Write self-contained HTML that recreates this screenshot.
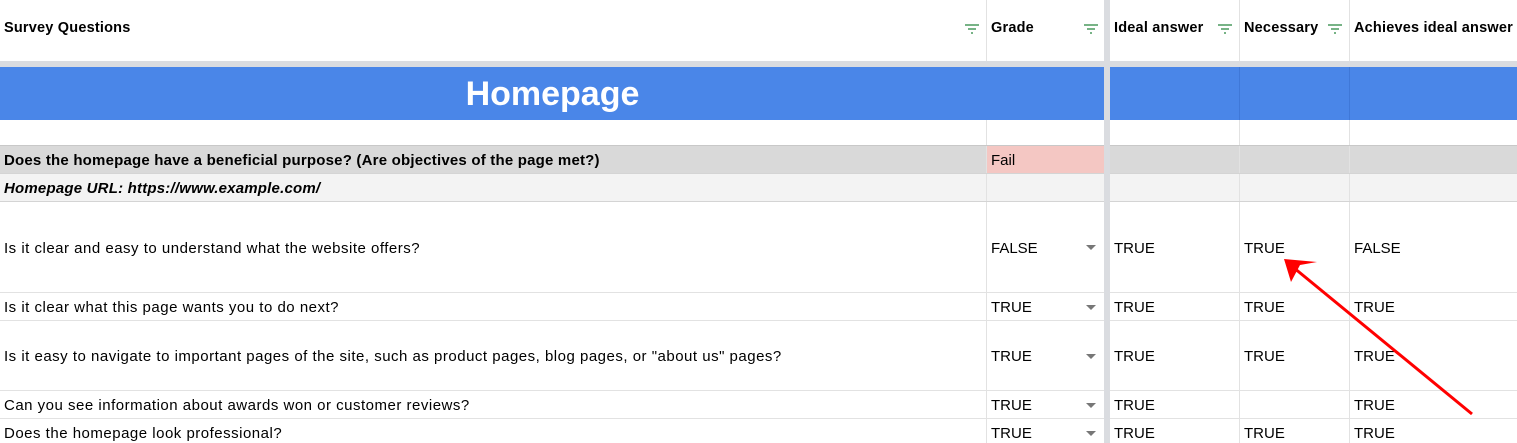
<!DOCTYPE html>
<html><head><meta charset="utf-8"><style>
body{margin:0;width:1517px;height:443px;overflow:hidden;background:#fff;font-family:"Liberation Sans",sans-serif;font-size:15px;letter-spacing:0.5px;color:#000;position:relative}
.a{position:absolute}
.t{position:absolute;white-space:nowrap}
.vl{position:absolute;width:1px;background:#e2e2e2}
.hl{position:absolute;height:1px;background:#e2e2e2;left:0;width:1517px}
.b{font-weight:bold;font-size:15px;letter-spacing:0.2px}
.h{font-weight:bold;font-size:14.5px;letter-spacing:0.2px}
.v{letter-spacing:0}
.dd{position:absolute;width:0;height:0;border-left:5px solid transparent;border-right:5px solid transparent;border-top:5px solid #777;left:1086px}
</style></head><body>
<div class="a" style="left:0;top:67px;width:1517px;height:53px;background:#4a86e8"></div>
<div class="a" style="left:0;top:145px;width:1517px;height:28px;background:#d9d9d9"></div>
<div class="a" style="left:987px;top:145px;width:118px;height:28px;background:#f4c7c3"></div>
<div class="a" style="left:0;top:173px;width:1517px;height:28px;background:#f3f3f3"></div>
<div class="vl" style="left:986px;top:0;height:67px"></div>
<div class="vl" style="left:986px;top:120px;height:323px"></div>
<div class="vl" style="left:1239px;top:0;height:443px"></div>
<div class="vl" style="left:1349px;top:0;height:443px"></div>
<div class="a" style="left:1239px;top:67px;width:1px;height:53px;background:#3f78d8"></div>
<div class="a" style="left:1349px;top:67px;width:1px;height:53px;background:#3f78d8"></div>
<div class="hl" style="top:145px;background:#c8c8c8"></div>
<div class="hl" style="top:173px;background:#d4d4d4"></div>
<div class="hl" style="top:201px;background:#d4d4d4"></div>
<div class="hl" style="top:292px"></div>
<div class="hl" style="top:320px"></div>
<div class="hl" style="top:390px"></div>
<div class="hl" style="top:418px"></div>
<div class="a" style="left:0;top:61px;width:1517px;height:6px;background:#dadce0"></div>
<div class="a" style="left:1104px;top:0;width:6px;height:443px;background:#dadce0"></div>
<div class="t h" style="left:4px;top:20px">Survey Questions</div>
<div class="t h" style="left:991px;top:20px">Grade</div>
<div class="t h" style="left:1114px;top:20px">Ideal answer</div>
<div class="t h" style="left:1244px;top:20px">Necessary</div>
<div class="t h" style="left:1354px;top:20px">Achieves ideal answer</div>
<svg class="a" style="left:0;top:0" width="1517" height="61">
<g stroke="#4a9a5e" stroke-width="1.5">
<path d="M965 25h14M968 29h8M971 33h2"/>
<path d="M1084 25h14M1087 29h8M1090 33h2"/>
<path d="M1218 25h14M1221 29h8M1224 33h2"/>
<path d="M1328 25h14M1331 29h8M1334 33h2"/>
</g></svg>
<div class="t" style="left:0;width:1105px;top:75px;text-align:center;color:#fff;font-weight:bold;font-size:34px;letter-spacing:0">Homepage</div>
<div class="t b" style="left:4px;top:152px">Does the homepage have a beneficial purpose? (Are objectives of the page met?)</div>
<div class="t v" style="left:991px;top:152px">Fail</div>
<div class="t b" style="left:4px;top:180px;font-style:italic">Homepage URL: https://www.example.com/</div>
<div class="t" style="left:4px;top:240px">Is it clear and easy to understand what the website offers?</div>
<div class="t v" style="left:991px;top:240px">FALSE</div><div class="dd" style="top:245px"></div>
<div class="t v" style="left:1114px;top:240px">TRUE</div><div class="t v" style="left:1244px;top:240px">TRUE</div><div class="t v" style="left:1354px;top:240px">FALSE</div>
<div class="t" style="left:4px;top:299px">Is it clear what this page wants you to do next?</div>
<div class="t v" style="left:991px;top:299px">TRUE</div><div class="dd" style="top:305px"></div>
<div class="t v" style="left:1114px;top:299px">TRUE</div><div class="t v" style="left:1244px;top:299px">TRUE</div><div class="t v" style="left:1354px;top:299px">TRUE</div>
<div class="t" style="left:4px;top:348px">Is it easy to navigate to important pages of the site, such as product pages, blog pages, or "about us" pages?</div>
<div class="t v" style="left:991px;top:348px">TRUE</div><div class="dd" style="top:354px"></div>
<div class="t v" style="left:1114px;top:348px">TRUE</div><div class="t v" style="left:1244px;top:348px">TRUE</div><div class="t v" style="left:1354px;top:348px">TRUE</div>
<div class="t" style="left:4px;top:397px">Can you see information about awards won or customer reviews?</div>
<div class="t v" style="left:991px;top:397px">TRUE</div><div class="dd" style="top:403px"></div>
<div class="t v" style="left:1114px;top:397px">TRUE</div><div class="t v" style="left:1354px;top:397px">TRUE</div>
<div class="t" style="left:4px;top:425px">Does the homepage look professional?</div>
<div class="t v" style="left:991px;top:425px">TRUE</div><div class="dd" style="top:431px"></div>
<div class="t v" style="left:1114px;top:425px">TRUE</div><div class="t v" style="left:1244px;top:425px">TRUE</div><div class="t v" style="left:1354px;top:425px">TRUE</div>
<svg class="a" style="left:0;top:0" width="1517" height="443">
<path d="M1472 414L1288 263" stroke="#f00" stroke-width="3" fill="none"/>
<path d="M1284 259L1317 262L1300 265L1291 282Z" fill="#f00"/>
</svg>
</body></html>
